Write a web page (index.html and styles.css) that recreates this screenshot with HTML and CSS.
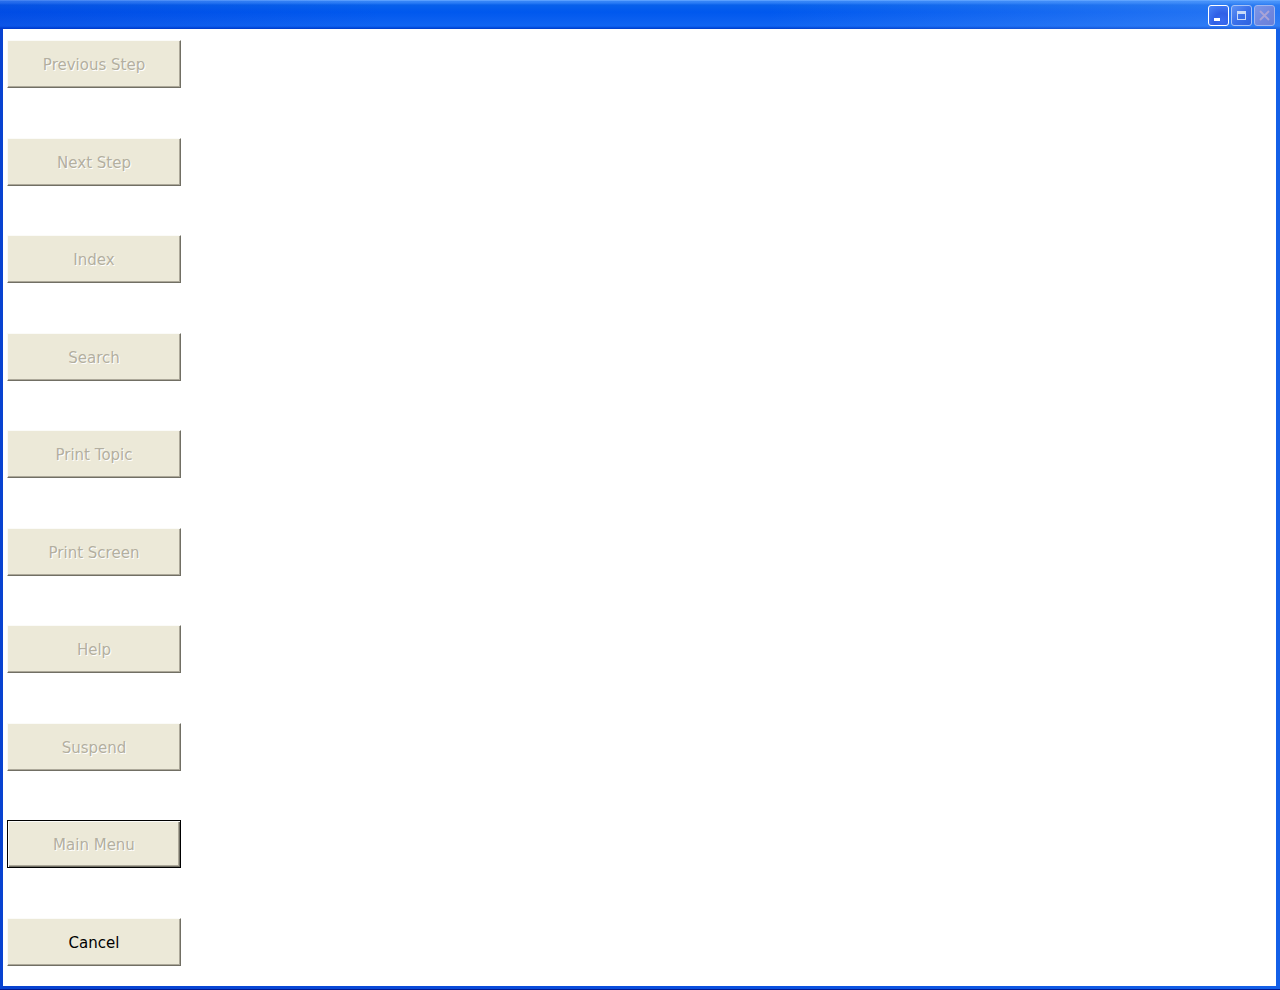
FILE: index.html
```html
<!DOCTYPE html>
<html>
<head>
<meta charset="utf-8">
<link rel="stylesheet" href="styles.css">
</head>
<body>
<div class="window">
  <div class="titlebar">
    <div class="title-controls">
      <div class="tbtn tbtn-min"><span class="min-glyph"></span></div>
      <div class="tbtn tbtn-max"><span class="max-glyph"></span></div>
      <div class="tbtn tbtn-close">
        <svg width="13" height="13" viewBox="0 0 13 13"><path d="M2 2 L11 11 M11 2 L2 11" stroke="#a9a3d6" stroke-width="1.8" fill="none"/></svg>
      </div>
    </div>
  </div>
  <div class="client">
    <div class="buttons">
      <div class="btn disabled">Previous Step</div>
      <div class="btn disabled">Next Step</div>
      <div class="btn disabled">Index</div>
      <div class="btn disabled">Search</div>
      <div class="btn disabled">Print Topic</div>
      <div class="btn disabled">Print Screen</div>
      <div class="btn disabled">Help</div>
      <div class="btn disabled">Suspend</div>
      <div class="btn disabled default">Main Menu</div>
      <div class="btn">Cancel</div>
    </div>
  </div>
</div>
</body>
</html>
```
FILE: styles.css
```css
html, body {
  margin: 0;
  padding: 0;
  width: 1280px;
  height: 990px;
  overflow: hidden;
}
body {
  font-family: "DejaVu Sans", "Liberation Sans", sans-serif;
}
.window {
  width: 1280px;
  height: 990px;
  box-sizing: border-box;
  display: flex;
  flex-direction: column;
  background: linear-gradient(to right, #0842d0 0%, #0a50e0 60%, #1460e8 100%);
  padding: 0 4px 3px 3px;
  border-bottom: 1px solid #001a90;
}
.titlebar {
  height: 29px;
  margin: 0 -4px 0 -3px;
  flex: none;
  position: relative;
  background: linear-gradient(to bottom, #3d8bf8 0px, #2a7cf5 3px, #0861eb 5px, #0058ee 12px, #0a5ff0 20px, #1065f2 26px, #0046d8 28px, #003fc8 29px);
  display: flex;
  justify-content: flex-end;
  align-items: flex-start;
  box-shadow: inset 0 1px 0 #5aa0ff;
}
.titlebar::before {
  content: "";
  position: absolute;
  inset: 0;
  background: linear-gradient(to right, rgba(0,40,200,0.25) 0%, rgba(0,40,200,0) 30%, rgba(90,160,255,0.0) 60%, rgba(110,175,255,0.35) 100%);
  pointer-events: none;
}
.title-controls {
  position: relative;
  display: flex;
  gap: 2px;
  margin-top: 5px;
  margin-right: 5px;
}
.tbtn {
  width: 21px;
  height: 21px;
  box-sizing: border-box;
  border: 1px solid #ffffff;
  border-radius: 3px;
  display: flex;
  align-items: center;
  justify-content: center;
  position: relative;
}
.tbtn-min {
  background: radial-gradient(circle at 70% 80%, #3a6cf0 0%, #2f5fe6 40%, #4a86f8 100%);
  background-color: #3169ea;
}
.tbtn-max {
  border-color: #a7c2f6;
  background: linear-gradient(135deg, #5e92f5 0%, #3a70ea 50%, #2e62e0 100%);
}
.tbtn-close {
  border-color: #9fb6f0;
  background: linear-gradient(135deg, #7c97e8 0%, #6f86de 60%, #6a80d8 100%);
}
.min-glyph {
  position: absolute;
  left: 5px;
  bottom: 4px;
  width: 6px;
  height: 3px;
  background: #ffffff;
}
.max-glyph {
  width: 9px;
  height: 9px;
  box-sizing: border-box;
  border: 1px solid #c8daf8;
  border-top-width: 3px;
}
.client {
  flex: 1;
  background: #ffffff;
  padding: 11px 0 0 4px;
}
.buttons {
  display: flex;
  flex-direction: column;
  gap: 49.5px;
  width: 174px;
}
.btn {
  width: 174px;
  height: 48px;
  box-sizing: border-box;
  padding-top: 2px;
  background: #ece9d8;
  border-top: 1px solid #fbfbf8;
  border-left: 1px solid #fbfbf8;
  border-right: 1px solid #716f64;
  border-bottom: 1px solid #716f64;
  box-shadow: inset -1px -1px 0 #aca899;
  display: flex;
  align-items: center;
  justify-content: center;
  font-family: "DejaVu Sans", sans-serif;
  font-size: 15px;
  color: #000000;
}
.btn.disabled {
  color: #b3afa0;
  text-shadow: 1px 1px 0 #ffffff;
}
.btn.default {
  border: 1px solid #000000;
  box-shadow: inset 1px 1px 0 #fbfbf8, inset -1px -1px 0 #716f64, inset -2px -2px 0 #aca899;
}
```
